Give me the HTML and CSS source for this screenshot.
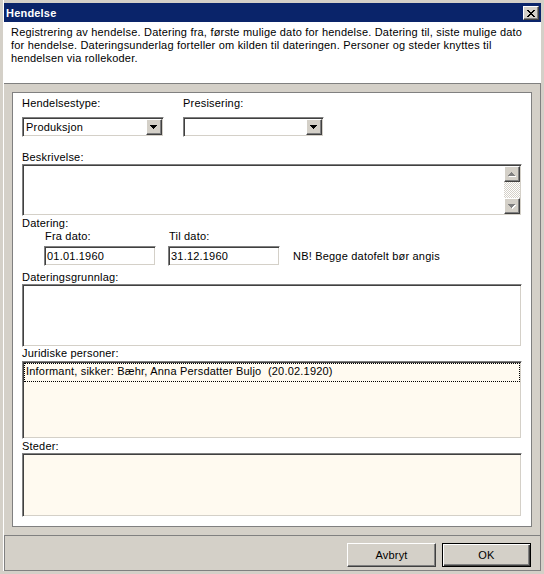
FILE: index.html
```html
<!DOCTYPE html>
<html>
<head>
<meta charset="utf-8">
<title>Hendelse</title>
<link rel="stylesheet" href="styles.css">
</head>
<body>
<div class="window">
  <div class="titlebar">
    <span class="title">Hendelse</span>
    <span class="close"><svg width="8" height="7" viewBox="0 0 8 7" shape-rendering="crispEdges"><path d="M0 0h2v1H0zM6 0h2v1H6zM1 1h2v1H1zM5 1h2v1H5zM2 2h4v1H2zM3 3h2v1H3zM2 4h4v1H2zM1 5h2v1H1zM5 5h2v1H5zM0 6h2v1H0zM6 6h2v1H6z" fill="#000"/></svg></span>
  </div>
  <div class="desc">Registrering av hendelse. Datering fra, første mulige dato for hendelse. Datering til, siste mulige dato<br>for hendelse. Dateringsunderlag forteller om kilden til dateringen. Personer og steder knyttes til<br>hendelsen via rollekoder.</div>
  <div class="body">
    <div class="panel">
      <div class="row">
        <div class="field">
          <div class="label">Hendelsestype:</div>
          <div class="combo sunken">
            <span class="combo-text">Produksjon</span>
            <span class="dropbtn raised"><svg width="7" height="4" viewBox="0 0 7 4" shape-rendering="crispEdges"><path d="M0 0h7v1H0zM1 1h5v1H1zM2 2h3v1H2zM3 3h1v1H3z" fill="#000"/></svg></span>
          </div>
        </div>
        <div class="field">
          <div class="label">Presisering:</div>
          <div class="combo combo-narrow sunken">
            <span class="combo-text"></span>
            <span class="dropbtn raised"><svg width="7" height="4" viewBox="0 0 7 4" shape-rendering="crispEdges"><path d="M0 0h7v1H0zM1 1h5v1H1zM2 2h3v1H2zM3 3h1v1H3z" fill="#000"/></svg></span>
          </div>
        </div>
      </div>

      <div class="label gap-beskr">Beskrivelse:</div>
      <div class="textbox tb-beskr sunken">
        <div class="vscroll">
          <span class="sbtn raised"><svg width="8" height="5" viewBox="0 0 8 5" shape-rendering="crispEdges"><path d="M4 1h1v1H4zM3 2h3v1H3zM2 3h5v1H2zM1 4h7v1H1z" fill="#fff"/><path d="M3 0h1v1H3zM2 1h3v1H2zM1 2h5v1H1zM0 3h7v1H0z" fill="#808080"/></svg></span>
          <span class="strack"></span>
          <span class="sbtn raised"><svg width="8" height="5" viewBox="0 0 8 5" shape-rendering="crispEdges"><path d="M1 1h7v1H1zM2 2h5v1H2zM3 3h3v1H3zM4 4h1v1H4z" fill="#fff"/><path d="M0 0h7v1H0zM1 1h5v1H1zM2 2h3v1H2zM3 3h1v1H3z" fill="#808080"/></svg></span>
        </div>
      </div>

      <div class="label gap-1">Datering:</div>
      <div class="daterow">
        <div class="field">
          <div class="label sublabel">Fra dato:</div>
          <div class="dateinput sunken">01.01.1960</div>
        </div>
        <div class="field">
          <div class="label sublabel">Til dato:</div>
          <div class="dateinput sunken">31.12.1960</div>
        </div>
        <span class="note">NB! Begge datofelt bør angis</span>
      </div>

      <div class="label gap-5">Dateringsgrunnlag:</div>
      <div class="textbox tb-grunnlag sunken"></div>

      <div class="label">Juridiske personer:</div>
      <div class="listbox lb-personer sunken gap-1">
        <div class="lbitem">Informant, sikker: Bæhr, Anna Persdatter Buljo  (20.02.1920)</div>
      </div>

      <div class="label gap-1">Steder:</div>
      <div class="listbox lb-steder sunken"></div>
    </div>
  </div>
  <div class="buttons">
    <button class="btn">Avbryt</button>
    <button class="btn btn-default">OK</button>
  </div>
</div>
</body>
</html>
```

FILE: styles.css
```css
* {
  box-sizing: border-box;
}

html,
body {
  margin: 0;
  padding: 0;
}

body {
  width: 544px;
  height: 574px;
  overflow: hidden;
  background: #d4d0c8;
  font-family: Tahoma, "Liberation Sans", Arial, sans-serif;
  font-size: 11px;
  letter-spacing: 0.2px;
  color: #000;
}

.window {
  margin-left: 3px;
  width: 538px;
  border-left: 1px solid #ffffff;
  padding-top: 3px;
  background: #d4d0c8;
}

.titlebar {
  height: 19px;
  background: #0a246a;
  color: #fff;
  display: flex;
  align-items: center;
  justify-content: space-between;
  padding: 0 2px;
}

.title {
  font-weight: bold;
  line-height: 13px;
  margin-top: 2px;
}

.close {
  width: 16px;
  height: 14px;
  background: #d4d0c8;
  border: 1px solid;
  border-color: #fff #404040 #404040 #fff;
  box-shadow: inset -1px -1px #808080;
  display: flex;
  align-items: center;
  justify-content: center;
  margin-top: 1px;
}

.close svg {
  display: block;
  margin-left: -1px;
}

.desc {
  height: 62px;
  background: #fff;
  border-bottom: 1px solid #808080;
  padding: 4px 7px 0;
  line-height: 13px;
  white-space: nowrap;
}

.body {
  padding: 8px 8px 8px 8px;
  border-right: 1px solid #808080;
}

.panel {
  width: 520px;
  height: 435px;
  background: #fff;
  border: 1px solid #808080;
  padding: 4px 8px 0 9px;
}

.row {
  display: flex;
  gap: 19px;
}

.label {
  height: 13px;
  line-height: 13px;
  white-space: nowrap;
}

.sunken {
  border: 1px solid;
  border-color: #808080 #fff #fff #808080;
  box-shadow: inset 1px 1px #404040, inset -1px -1px #d4d0c8;
  padding: 1px;
}

.raised {
  background: #d4d0c8;
  border: 1px solid;
  border-color: #fff #404040 #404040 #fff;
  box-shadow: inset -1px -1px #808080;
}

.combo {
  width: 142px;
  height: 20px;
  margin-top: 7px;
  background: #fff;
  display: flex;
}

.combo-narrow {
  width: 141px;
}

.combo-text {
  flex: 1;
  line-height: 16px;
  padding-left: 2px;
}

.dropbtn {
  width: 16px;
  height: 16px;
  display: flex;
  align-items: center;
  justify-content: center;
}

.dropbtn svg {
  display: block;
  margin: 0 1px 0 0;
}

.gap-beskr {
  margin-top: 14px;
}

.gap-1 {
  margin-top: 1px;
}

.gap-5 {
  margin-top: 5px;
}

.textbox {
  width: 500px;
  background: #fff;
  display: flex;
  justify-content: flex-end;
}

.tb-beskr {
  height: 52px;
}

.tb-grunnlag {
  height: 63px;
}

.vscroll {
  width: 16px;
  height: 100%;
  display: flex;
  flex-direction: column;
}

.sbtn {
  width: 16px;
  height: 16px;
  display: flex;
  align-items: center;
  justify-content: center;
}

.sbtn svg {
  display: block;
}

.strack {
  flex: 1;
  background: repeating-conic-gradient(#ffffff 0 25%, #d4d0c8 0 50%) 0 0 / 2px 2px;
}

.daterow {
  display: flex;
  align-items: flex-end;
  gap: 12px;
  margin-left: 22px;
}

.sublabel {
  padding-left: 1px;
}

.dateinput {
  width: 112px;
  height: 20px;
  margin-top: 3px;
  background: #fff;
  line-height: 16px;
  padding-left: 2px;
}

.note {
  line-height: 13px;
  margin-left: 1px;
  margin-bottom: 3px;
  white-space: nowrap;
}

.listbox {
  width: 500px;
  background: #fffaf0;
}

.lb-personer {
  height: 78px;
}

.lb-steder {
  height: 64px;
}

.lbitem {
  height: 19px;
  border: 1px dotted #000;
  padding: 1px 0 0 1px;
  line-height: 13px;
  white-space: pre;
}

.buttons {
  display: flex;
  justify-content: flex-end;
  gap: 6px;
  border-top: 1px solid #808080;
  border-left: 1px solid #808080;
  border-right: 1px solid #808080;
  border-bottom: 1px solid #808080;
  padding: 7px 9px 3px 0;
}

.btn {
  width: 89px;
  height: 24px;
  padding: 0;
  margin: 0;
  font-family: inherit;
  font-size: 11px;
  letter-spacing: 0.2px;
  line-height: 13px;
  color: #000;
  background: #d4d0c8;
  border: 1px solid;
  border-color: #fff #404040 #404040 #fff;
  box-shadow: inset -1px -1px #808080;
}

.btn-default {
  border: 1px solid #000;
  box-shadow: inset 1px 1px #fff, inset -1px -1px #404040, inset -2px -2px #808080;
}
```
